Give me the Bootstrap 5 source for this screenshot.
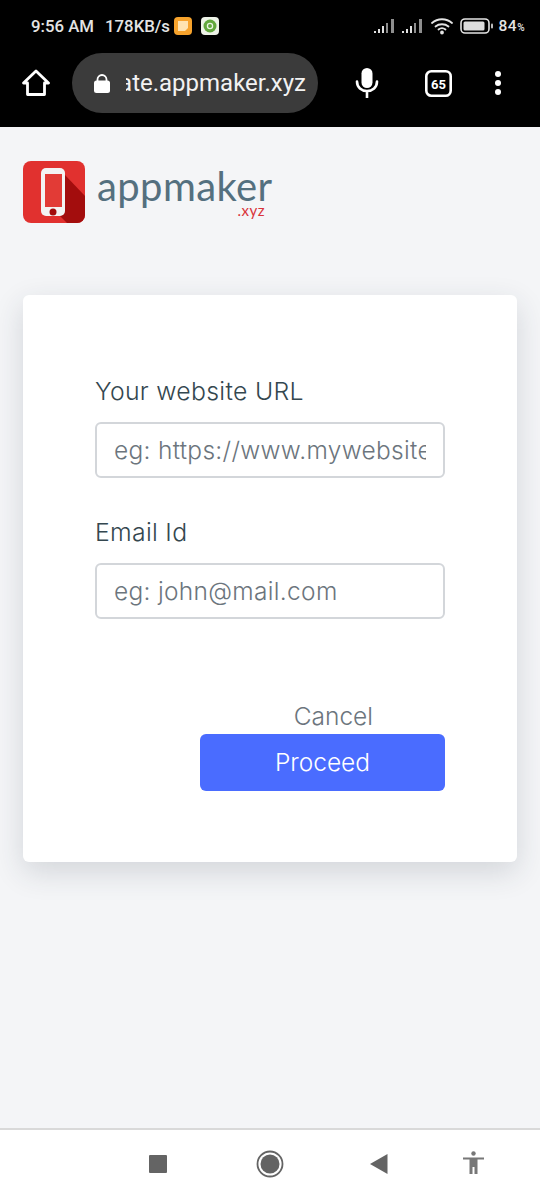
<!DOCTYPE html>
<html lang="en">
<head>
    <meta charset="UTF-8">
    <meta name="viewport" content="width=device-width, initial-scale=1.0">
    <title>appmaker.xyz</title>
    <link href="https://cdn.jsdelivr.net/npm/bootstrap@5.3.0/dist/css/bootstrap.min.css" rel="stylesheet">
    <style>
        body { width: 540px; height: 1200px; overflow: hidden; background: #f4f5f7; font-family: Inter, "Liberation Sans", sans-serif; }
        .phone-top { height: 127px; background: #000; flex: none; }
        .status-row { height: 53px; padding: 0 15px 2px 31px; color: #e4e4e4; font: 500 16.8px Roboto, sans-serif; }
        .status-row svg { display: block; flex: none; }
        .status-speed { margin-left: 11px; }
        .status-batt { margin-left: 7px; }
        .status-pct { font-size: 15.5px; letter-spacing: .5px; margin-left: 6px; }
        .status-pct span { font-size: 10px; }
        .tool-row { height: 60px; padding-left: 22px; }
        .url-pill { width: 246px; height: 60px; margin-left: 22px; border-radius: 30px; background: #3b3b3b; color: #f2f2f2; padding-left: 22px; }
        .url-text { width: 180px; margin-left: 16px; overflow: hidden; white-space: nowrap; font: 400 24px Roboto, sans-serif; }
        .page-area { padding: 34px 23px 0; min-height: 0; }
        .logo-row { height: 62px; margin-bottom: 72px; }
        .logo-word { margin-left: 12px; width: 175px; color: #54707f; font: 400 40px/30px Lato, sans-serif; letter-spacing: .4px; position: relative; top: 2px; }
        .logo-tld { color: #d9333b; font: 400 15px/14px Lato, sans-serif; letter-spacing: .5px; text-align: right; padding-right: 7px; margin-top: 2px; }
        .form-box { width: 494px; height: 567px; border: 0; border-radius: 6px; box-shadow: 0 10px 30px rgba(40, 50, 70, .16); padding: 82px 72px 0; }
        .field-label { display: block; margin: 0 0 17px; color: #34474f; font-size: 24.8px; font-weight: 300; line-height: 28px; letter-spacing: .3px; }
        .field-input { height: 56px; padding: 0 17px; border: 2px solid #d3d6da; border-radius: 6px; font-size: 24.5px; font-weight: 300; letter-spacing: .3px; color: #6c757d; }
        .field-input::placeholder { color: #6c757d; opacity: 1; }
        .field-gap { margin-bottom: 40px; }
        .cancel-link { margin-top: 82px; margin-right: 72px; color: #6c757d; font-size: 24.5px; font-weight: 300; line-height: 30px; text-decoration: none; }
        .proceed-btn { width: 245px; height: 57px; margin-top: 3px; border: 0; border-radius: 6px; background: #4a6cff; color: #fff; font-size: 24.5px; font-weight: 300; }
        .phone-nav { height: 72px; flex: none; background: #fff; border-top: 2px solid #d9d9d9; position: relative; }
        .phone-nav svg { position: absolute; top: 20px; }
    </style>
</head>
<body class="d-flex flex-column">

    <!-- Android status bar and browser toolbar -->
    <div class="phone-top">
        <div class="status-row d-flex align-items-center">
            <span>9:56 AM</span>
            <span class="status-speed">178KB/s</span>
            <svg class="ms-1" width="18" height="18" viewBox="0 0 18 18"><rect width="18" height="18" rx="4" fill="#f7a32c"/><path d="M4 4h10v7l-3 3H4z" fill="#ffe3b0"/></svg>
            <svg style="margin-left:9px" width="18" height="18" viewBox="0 0 18 18"><rect width="18" height="18" rx="4" fill="#eef3e8"/><circle cx="9" cy="9" r="6.5" fill="#62a83c"/><circle cx="9" cy="9" r="2.6" fill="none" stroke="#e8f3df" stroke-width="1.3"/></svg>
            <svg class="ms-auto" width="49" height="18" viewBox="0 0 49 18" fill="#8e8e8e">
                <path d="M0 14h2v2H0zM4 12h2v4H4zM8 9h2v7H8z" fill="#e0e0e0"/><path d="M12 6h2v10h-2zM17 2h3v14h-3z"/>
                <path d="M28 14h2v2h-2zM32 12h2v4h-2zM36 9h2v7h-2z" fill="#e0e0e0"/><path d="M40 6h2v10h-2zM45 2h3v14h-3z"/>
            </svg>
            <svg class="ms-2" width="22" height="18" viewBox="0 0 22 18" fill="none" stroke="#e4e4e4" stroke-width="1.8" stroke-linecap="round"><path d="M1 6c5.500-5 14.500-5 20 0"/><path d="M4.500 9.500c3.500-3 9.500-3 13 0"/><path d="M7.500 12.500c2-1.500 5-1.500 7 0"/><circle cx="11" cy="15.500" r="1" fill="#e4e4e4"/></svg>
            <svg class="status-batt" width="33" height="16" viewBox="0 0 33 16"><rect x="1" y="1" width="28" height="14" rx="4" fill="none" stroke="#e4e4e4" stroke-width="1.600"/><rect x="3.500" y="3.500" width="21" height="9" rx="1.500" fill="#dcdcdc"/><rect x="31" y="5.500" width="2" height="5" rx="1" fill="#bdbdbd"/></svg>
            <span class="status-pct">84<span>%</span></span>
        </div>
        <div class="tool-row d-flex align-items-center">
            <svg width="28" height="28" viewBox="0 0 28 28" fill="none" stroke="#fff" stroke-width="2.800" stroke-linejoin="round"><path d="M1.500 14 14 2l12.500 12H22.500v11.500H5.500V14z"/></svg>
            <div class="url-pill d-flex align-items-center">
                <svg width="16" height="19" viewBox="0 0 16 19"><path d="M3.500 8V5.500a4.500 4.500 0 0 1 9 0V8" fill="none" stroke="#fff" stroke-width="1.800"/><rect y="6.500" width="16" height="12.500" rx="2.500" fill="#fff"/></svg>
                <div class="url-text d-flex justify-content-end">ate.appmaker.xyz</div>
            </div>
            <svg style="margin-left:37px" width="24" height="30" viewBox="0 0 24 30"><rect x="6.500" y="0" width="11" height="20" rx="5.500" fill="#fff"/><path d="M2 13.500c0 6 4.500 9.500 10 9.500s10-3.500 10-9.500M12 23v7" fill="none" stroke="#fff" stroke-width="2.600" stroke-linecap="round"/></svg>
            <svg style="margin-left:46px" width="27" height="27" viewBox="0 0 27 27"><rect x="1.300" y="1.300" width="24.400" height="24.400" rx="5" fill="none" stroke="#fff" stroke-width="2.600"/><text x="13.500" y="18.500" text-anchor="middle" fill="#fff" font-family="Roboto, sans-serif" font-size="13" font-weight="700">65</text></svg>
            <svg style="margin-left:42px" width="8" height="26" viewBox="0 0 8 26" fill="#fff"><circle cx="4" cy="4" r="3"/><circle cx="4" cy="13" r="3"/><circle cx="4" cy="22" r="3"/></svg>
        </div>
    </div>

    <!-- Page -->
    <div class="page-area flex-grow-1">
        <div class="logo-row d-flex align-items-center">
            <svg width="62" height="62" viewBox="0 0 62 62">
                <rect width="62" height="62" rx="8" fill="#e1312f"/>
                <path d="M42 14 62 35v19a8 8 0 0 1-8 8H44l-7-7z" fill="#a30d0d"/>
                <rect x="18" y="7" width="24" height="48" rx="5" fill="#f3f3f3"/>
                <rect x="22" y="13" width="17" height="33" fill="#e23b36"/>
                <circle cx="30" cy="51" r="3.500" fill="#a30d0d"/>
            </svg>
            <div class="logo-word">appmaker<div class="logo-tld">.xyz</div></div>
        </div>

        <form class="card form-box">
            <div class="field-gap">
                <label class="field-label" for="siteUrl">Your website URL</label>
                <input type="text" class="form-control field-input" id="siteUrl" placeholder="eg: https://www.mywebsite.com">
            </div>
            <div>
                <label class="field-label" for="emailId">Email Id</label>
                <input type="email" class="form-control field-input" id="emailId" placeholder="eg: john@mail.com">
            </div>
            <div class="d-flex flex-column align-items-end">
                <a href="#" class="cancel-link">Cancel</a>
                <button type="button" class="btn proceed-btn">Proceed</button>
            </div>
        </form>
    </div>

    <!-- Android nav bar -->
    <div class="phone-nav">
        <svg style="left:149px" width="18" height="28" viewBox="0 0 18 28"><rect y="5" width="18" height="18" rx="1" fill="#646464"/></svg>
        <svg style="left:256px" width="28" height="28" viewBox="0 0 28 28"><circle cx="14" cy="14" r="12.500" fill="none" stroke="#646464" stroke-width="1.800"/><circle cx="14" cy="14" r="9.500" fill="#646464"/></svg>
        <svg style="left:370px" width="18" height="28" viewBox="0 0 18 28"><path d="M0 14 17.500 4v20z" fill="#646464"/></svg>
        <svg style="left:463px" width="21" height="28" viewBox="0 0 21 28" fill="#777"><circle cx="10.500" cy="3.500" r="2.200"/><path d="M0 7.500h21v2h-6.500V24H11.500v-7h-2v7H6.500V9.500H0z"/></svg>
    </div>

</body>
</html>
